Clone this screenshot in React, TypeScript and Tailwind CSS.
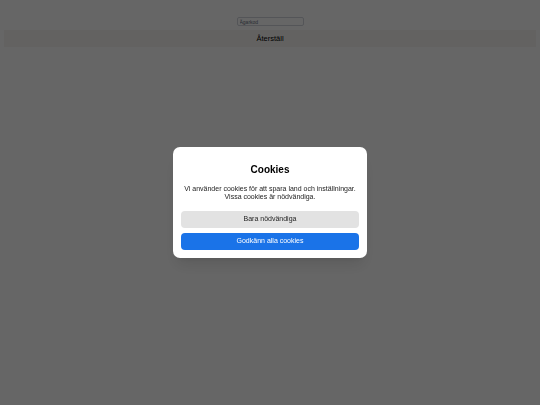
export default function App() {
  return (
    <div
      className="relative min-h-screen bg-white"
      style={{ fontFamily: '"Liberation Sans", Arial, sans-serif' }}
    >
      <div className="flex flex-col items-center pt-[17px]">
        <input
          type="text"
          placeholder="Ägarkod"
          className="h-[9px] w-[67px] rounded-[2px] border border-gray-300 px-[2px] text-[5px] text-gray-700 outline-none placeholder:text-gray-500"
        />
      </div>
      <div className="mx-1 mt-[4px] flex h-[17px] items-center justify-center bg-[#f8f6f3]">
        <button type="button" className="text-[7.5px] leading-none text-black">
          Återställ
        </button>
      </div>

      {/* Cookie-dialog */}
      <div className="fixed inset-0 flex items-center justify-center bg-black/60">
        <div className="w-[194px] rounded-[7px] bg-white px-2 pb-[8px] pt-[18px] text-center shadow-lg">
          <h2 className="text-[10px] font-bold leading-none text-black">Cookies</h2>
          <p className="mt-[10px] text-[7px] leading-[8px] text-[#222]">
            Vi använder cookies för att spara land och inställningar.
            <br />
            Vissa cookies är nödvändiga.
          </p>
          <div className="mt-[10px] flex flex-col gap-[5px]">
            <button
              type="button"
              className="h-[17px] w-full rounded-[4px] bg-[#e2e2e2] text-[7px] text-[#222]"
            >
              Bara nödvändiga
            </button>
            <button
              type="button"
              className="h-[17px] w-full rounded-[4px] bg-[#1a73e8] text-[7px] text-white"
            >
              Godkänn alla cookies
            </button>
          </div>
        </div>
      </div>
    </div>
  )
}
